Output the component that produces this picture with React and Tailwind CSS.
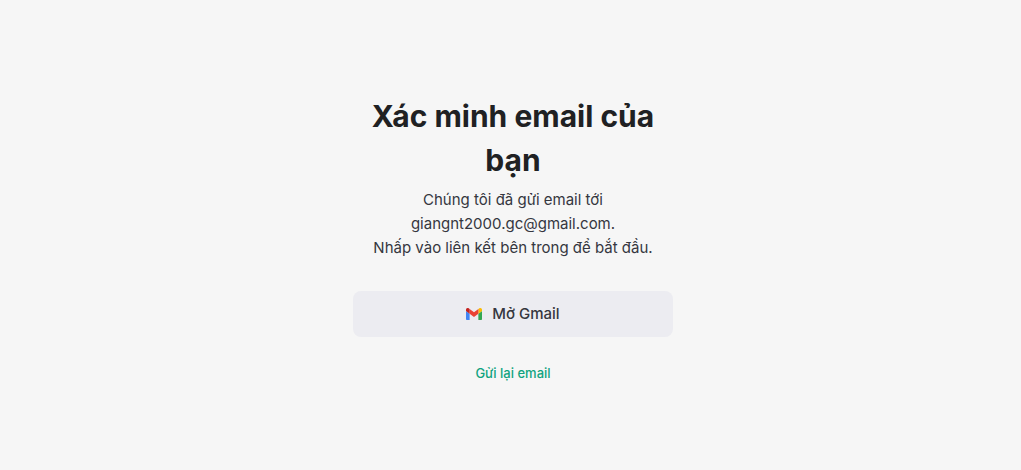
import React from "react";

const GmailIcon = () => (
  <svg
    viewBox="52 42 88 66"
    className="w-4 h-3 shrink-0"
    aria-hidden="true"
  >
    <path fill="#4285f4" d="M58 108h14V74L52 59v43c0 3.32 2.69 6 6 6" />
    <path fill="#34a853" d="M120 108h14c3.32 0 6-2.69 6-6V59l-20 15" />
    <path fill="#fbbc04" d="M120 48v26l20-15v-8c0-7.42-8.47-11.65-14.4-7.2" />
    <path fill="#ea4335" d="M72 74V48l24 18 24-18v26L96 92" />
    <path fill="#c5221f" d="M52 51v8l20 15V48l-5.6-4.2c-5.94-4.45-14.4-.22-14.4 7.2" />
  </svg>
);

const VerifyEmail = ({ email }) => (
  <section className="w-80 flex flex-col items-center text-center">
    <h1 className="text-[30px] leading-11 font-bold text-[#202123]">
      Xác minh email của bạn
    </h1>
    <p className="mt-1.5 text-[15px] leading-6 text-[#353740]">
      Chúng tôi đã gửi email tới
      <br />
      {email}.
      <br />
      Nhấp vào liên kết bên trong để bắt đầu.
    </p>

    <button
      type="button"
      className="mt-[31px] w-full h-[46px] flex items-center justify-center gap-2.5 rounded-lg bg-[#ececf1] text-[15px] font-medium text-[#353740] hover:bg-[#e3e3e9]"
    >
      <GmailIcon />
      Mở Gmail
    </button>

    <a
      href="#resend"
      className="mt-6 text-[13px] leading-6 font-medium text-[#10a37f] hover:underline"
    >
      Gửi lại email
    </a>
  </section>
);

const App = () => (
  <main className="min-h-screen flex justify-center bg-[#f6f6f6] pt-[94px] pb-12 pl-[5px] font-['Inter','Liberation_Sans',sans-serif]">
    <VerifyEmail email="giangnt2000.gc@gmail.com" />
  </main>
);

export default App;
